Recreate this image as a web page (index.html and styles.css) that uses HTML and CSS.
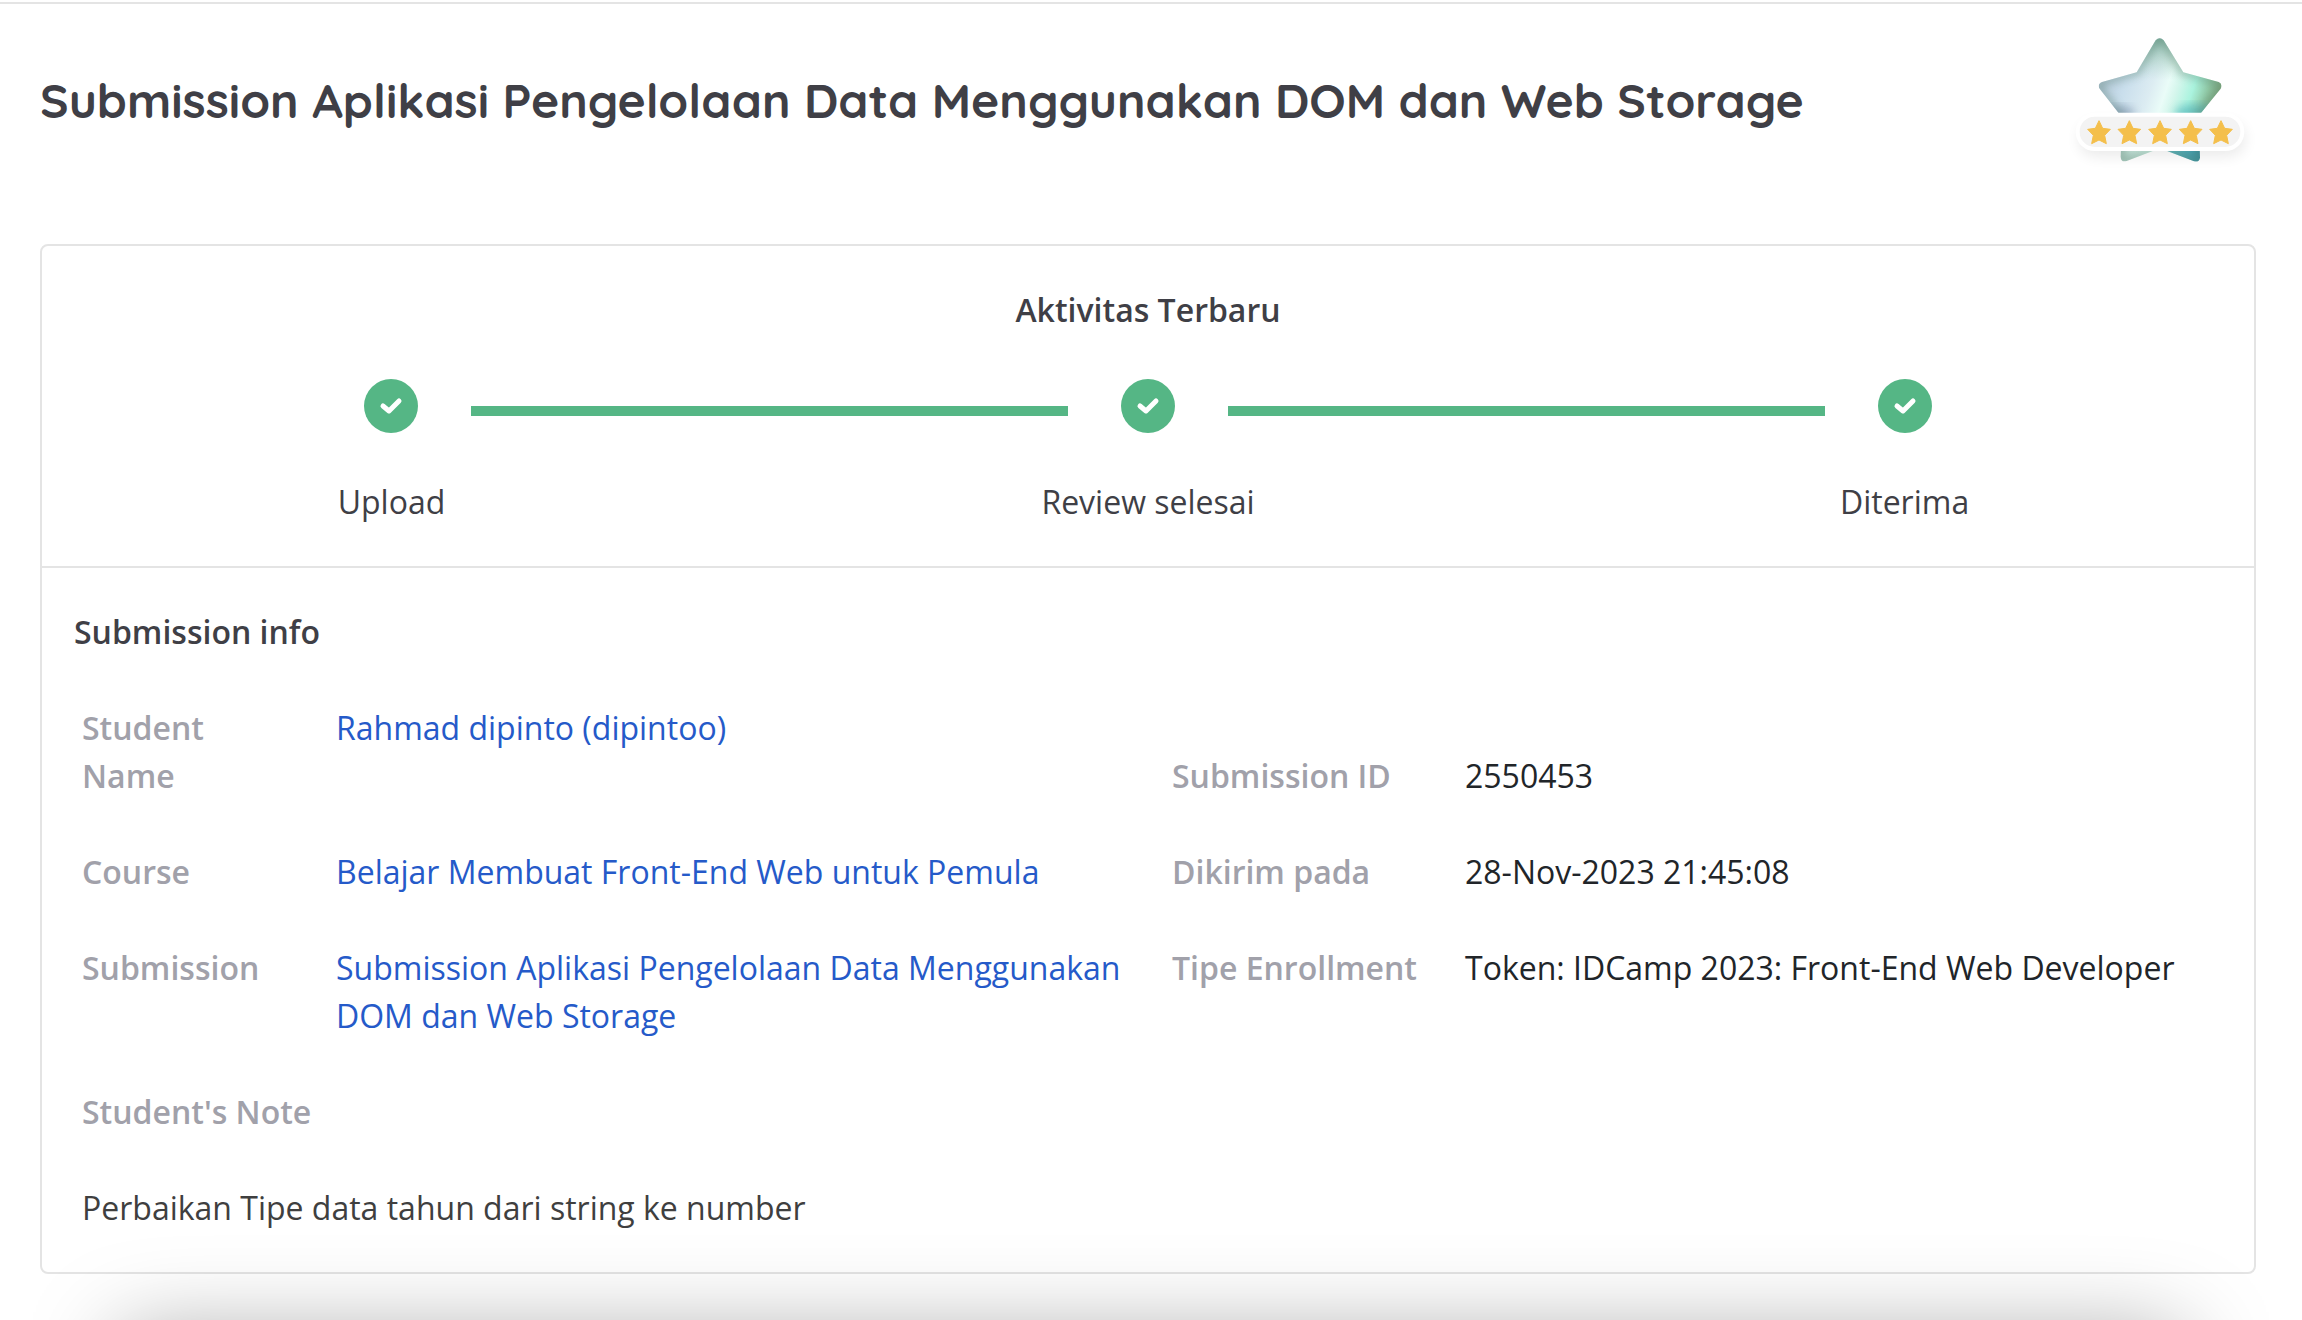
FILE: index.html
```html
<!DOCTYPE html>
<html lang="id">
<head>
<meta charset="utf-8">
<meta name="viewport" content="width=device-width, initial-scale=1">
<title>Submission Aplikasi Pengelolaan Data Menggunakan DOM dan Web Storage</title>
<link rel="stylesheet" href="styles.css">
</head>
<body>
<main class="page">
  <header class="page-header">
    <h1 class="page-title">Submission Aplikasi Pengelolaan Data Menggunakan DOM dan Web Storage</h1>
    <svg class="rating" viewBox="84 84 564 462" role="img" aria-label="Rating 5 dari 5">
      <defs>
        <linearGradient id="sheen" gradientUnits="userSpaceOnUse" x1="180" y1="240" x2="540" y2="360">
          <stop offset="0" stop-color="#b4c8d8"/>
          <stop offset=".2" stop-color="#c9deec"/>
          <stop offset=".4" stop-color="#dcecf2"/>
          <stop offset=".52" stop-color="#eafcf8"/>
          <stop offset=".6" stop-color="#d4f6ec"/>
          <stop offset=".72" stop-color="#aaf3de"/>
          <stop offset=".84" stop-color="#8fc6a2"/>
          <stop offset="1" stop-color="#7b9a68"/>
        </linearGradient>
        <linearGradient id="depth" x1="0" y1="0" x2="0" y2="1">
          <stop offset="0" stop-color="#5f9c84" stop-opacity=".8"/>
          <stop offset=".2" stop-color="#8fc0a8" stop-opacity=".4"/>
          <stop offset=".36" stop-color="#a0d0c0" stop-opacity="0"/>
        </linearGradient>
        <linearGradient id="legs" gradientUnits="userSpaceOnUse" x1="240" y1="0" x2="480" y2="0">
          <stop offset="0" stop-color="#b5d3c9"/>
          <stop offset=".4" stop-color="#d2f0e6"/>
          <stop offset=".65" stop-color="#5fb5bd"/>
          <stop offset="1" stop-color="#3c94a4"/>
        </linearGradient>
        <path id="big" d="M347 121Q359 108 371 121L430 217L536 246Q549 252 542 266L476 347L480 473Q477 488 462 484L360 445L260 483Q243 488 242 470L247 353L180 268Q170 253 186 246L290 217Z"/>
        <path id="mini" d="M0 -36L11 -13L34 -10L17 8L22 33L0 22L-22 33L-17 8L-34 -10L-11 -13Z" stroke-width="3" stroke-linejoin="round"/>
        <clipPath id="bigclip"><use href="#big"/></clipPath>
        <filter id="soft" x="-20%" y="-20%" width="140%" height="140%"><feGaussianBlur stdDeviation="13"/></filter>
        <filter id="drop" x="-20%" y="-60%" width="140%" height="260%"><feGaussianBlur stdDeviation="20"/></filter>
      </defs>
      <rect x="116" y="365" width="500" height="105" rx="52" fill="#000" opacity=".08" filter="url(#drop)"/>
      <g clip-path="url(#bigclip)">
        <rect x="170" y="100" width="380" height="300" fill="url(#sheen)"/>
        <rect x="170" y="100" width="380" height="390" fill="url(#depth)"/>
        <ellipse cx="465" cy="340" rx="60" ry="28" fill="#55b5bb" opacity=".65" filter="url(#soft)"/>
        <ellipse cx="235" cy="340" rx="50" ry="24" fill="#8398b2" opacity=".6" filter="url(#soft)"/>
        <rect x="170" y="400" width="380" height="90" fill="url(#legs)"/>
        <use href="#big" fill="none" stroke="#4c7562" stroke-width="16" opacity=".5" filter="url(#soft)"/>
      </g>
      <rect x="113" y="344" width="494" height="103" rx="51" fill="#f3f3f3" stroke="#fff" stroke-width="12"/>
      <g fill="#f4bf4b" stroke="#f4bf4b">
        <use href="#mini" x="177" y="398"/>
        <use href="#mini" x="268" y="398"/>
        <use href="#mini" x="360" y="398"/>
        <use href="#mini" x="452" y="398"/>
        <use href="#mini" x="543" y="398"/>
      </g>
    </svg>
  </header>

  <div class="card">
    <section class="activity">
      <h2 class="activity-title">Aktivitas Terbaru</h2>
      <ol class="steps">
        <li class="step">
          <svg class="step-icon" viewBox="0 0 54 54" aria-hidden="true"><circle cx="27" cy="27" r="27"/><path d="M19 27L25 32L35 22"/></svg>
          <span class="step-label">Upload</span>
        </li>
        <li class="step-line" aria-hidden="true"></li>
        <li class="step">
          <svg class="step-icon" viewBox="0 0 54 54" aria-hidden="true"><circle cx="27" cy="27" r="27"/><path d="M19 27L25 32L35 22"/></svg>
          <span class="step-label">Review selesai</span>
        </li>
        <li class="step-line" aria-hidden="true"></li>
        <li class="step">
          <svg class="step-icon" viewBox="0 0 54 54" aria-hidden="true"><circle cx="27" cy="27" r="27"/><path d="M19 27L25 32L35 22"/></svg>
          <span class="step-label">Diterima</span>
        </li>
      </ol>
    </section>

    <section class="info">
      <h2 class="info-title">Submission info</h2>
      <table class="info-table">
        <colgroup><col class="col-label"><col class="col-link"><col class="col-meta"><col></colgroup>
        <tbody>
          <tr>
            <th scope="row">Student<br>Name</th>
            <td><a href="#student">Rahmad dipinto (dipintoo)</a></td>
            <th scope="row" class="at-bottom">Submission ID</th>
            <td class="at-bottom">2550453</td>
          </tr>
          <tr>
            <th scope="row">Course</th>
            <td><a href="#course">Belajar Membuat Front-End Web untuk Pemula</a></td>
            <th scope="row">Dikirim pada</th>
            <td>28-Nov-2023 21:45:08</td>
          </tr>
          <tr>
            <th scope="row">Submission</th>
            <td><a href="#submission">Submission Aplikasi Pengelolaan Data Menggunakan DOM dan Web Storage</a></td>
            <th scope="row">Tipe Enrollment</th>
            <td>Token: IDCamp 2023: Front-End Web Developer</td>
          </tr>
          <tr>
            <th scope="row" colspan="4">Student's Note</th>
          </tr>
          <tr>
            <td class="note" colspan="4">Perbaikan Tipe data tahun dari string ke number</td>
          </tr>
        </tbody>
      </table>
    </section>
  </div>
</main>
</body>
</html>
```
FILE: styles.css
```css
* {
  box-sizing: border-box;
}

body {
  margin: 0;
  padding-top: 2px;
  background: #fff;
  color: #3f3f46;
  font: 400 32px/48px "Open Sans", "Noto Sans", sans-serif;
}

/* Soft shadow rising from the panel below the fold */
body::after {
  content: "";
  position: fixed;
  top: calc(100% + 15px);
  left: 120px;
  right: 120px;
  height: 200px;
  box-shadow: 0 0 90px rgba(0, 0, 0, 0.35);
}

.page {
  border-top: 2px solid #e4e4e4;
  padding: 24px 46px 40px 40px;
}

.page-header {
  display: flex;
  justify-content: space-between;
  align-items: flex-start;
  margin-bottom: 62px;
}

.page-title {
  margin: 40px 0 0;
  font: 700 48px/64px Quicksand, Lato, sans-serif;
}

.rating {
  flex: none;
  width: 188px;
  height: 154px;
}

.card {
  border: 2px solid #e4e4e4;
  border-radius: 8px;
}

.activity {
  padding: 40px calc(12% + 4px);
  border-bottom: 2px solid #e4e4e4;
}

.activity-title,
.info-title {
  margin: 0;
  font-size: 32px;
  font-weight: 600;
}

.activity-title {
  text-align: center;
}

.steps {
  display: flex;
  margin: 45px 0 0;
  padding: 0;
  list-style: none;
}

.step {
  display: flex;
  flex-direction: column;
  align-items: center;
  gap: 45px;
  width: 160px;
  flex: none;
}

.step-icon {
  width: 54px;
  height: 54px;
  fill: #55b685;
}

.step-icon path {
  fill: none;
  stroke: #fff;
  stroke-width: 5;
  stroke-linecap: round;
  stroke-linejoin: round;
}

.step-label {
  white-space: nowrap;
}

.step-line {
  flex: 1;
  height: 10px;
  margin-top: 27px;
  background: #55b685;
}

.info {
  padding: 40px 32px 16px;
}

.info-table {
  width: 100%;
  margin-top: 24px;
  border-collapse: collapse;
  table-layout: fixed;
}

.col-label {
  width: 254px;
}

.col-link {
  width: 836px;
}

.col-meta {
  width: 293px;
}

.info-table th,
.info-table td {
  padding: 24px 8px;
  text-align: left;
  vertical-align: top;
}

.info-table th {
  color: #a1a1aa;
  font-weight: 600;
}

.info-table td {
  color: #212529;
}

.info-table .at-bottom {
  vertical-align: bottom;
}

.info-table .note {
  color: #3f3f3f;
}

.info-table a {
  color: #255ac9;
  text-decoration: none;
}
```
